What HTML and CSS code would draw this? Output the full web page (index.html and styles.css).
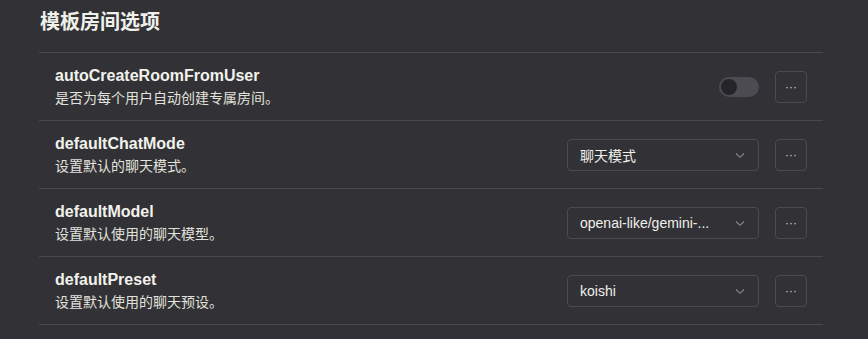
FILE: index.html
```html
<!DOCTYPE html>
<html lang="zh-CN">
<head>
<meta charset="utf-8">
<link rel="stylesheet" href="styles.css">
</head>
<body>
<div class="page">
  <h2 class="heading">模板房间选项</h2>
  <div class="list">
    <div class="row">
      <div class="info">
        <div class="title">autoCreateRoomFromUser</div>
        <div class="desc">是否为每个用户自动创建专属房间。</div>
      </div>
      <div class="controls">
        <span class="switch"><span class="knob"></span></span>
        <button class="more">···</button>
      </div>
    </div>
    <div class="row">
      <div class="info">
        <div class="title">defaultChatMode</div>
        <div class="desc">设置默认的聊天模式。</div>
      </div>
      <div class="controls">
        <div class="select"><span class="value">聊天模式</span>
          <svg class="chev" viewBox="0 0 12 12" width="12" height="12"><path d="M2 4.5 L6 8.3 L10 4.5" fill="none" stroke="currentColor" stroke-width="1.1"/></svg></div>
        <button class="more">···</button>
      </div>
    </div>
    <div class="row">
      <div class="info">
        <div class="title">defaultModel</div>
        <div class="desc">设置默认使用的聊天模型。</div>
      </div>
      <div class="controls">
        <div class="select"><span class="value">openai-like/gemini-...</span>
          <svg class="chev" viewBox="0 0 12 12" width="12" height="12"><path d="M2 4.5 L6 8.3 L10 4.5" fill="none" stroke="currentColor" stroke-width="1.1"/></svg></div>
        <button class="more">···</button>
      </div>
    </div>
    <div class="row">
      <div class="info">
        <div class="title">defaultPreset</div>
        <div class="desc">设置默认使用的聊天预设。</div>
      </div>
      <div class="controls">
        <div class="select"><span class="value">koishi</span>
          <svg class="chev" viewBox="0 0 12 12" width="12" height="12"><path d="M2 4.5 L6 8.3 L10 4.5" fill="none" stroke="currentColor" stroke-width="1.1"/></svg></div>
        <button class="more">···</button>
      </div>
    </div>
  </div>
</div>
</body>
</html>
```
FILE: styles.css
```css
html, body {
  margin: 0;
  padding: 0;
  background: #313136;
  height: 100%;
}
body {
  font-family: "Liberation Sans", "Noto Sans CJK SC", sans-serif;
  color: rgba(255, 255, 245, 0.9);
}
.page {
  width: 784px;
  padding: 8px 0 0 39px;
}
.heading {
  margin: 0 0 16px 1px;
  font-size: 20px;
  line-height: 28px;
  font-weight: 700;
  color: #f0f0ea;
}
.list {
  border-bottom: 1px solid #47474c;
}
.row {
  height: 67px;
  border-top: 1px solid #47474c;
  display: flex;
  align-items: center;
  justify-content: space-between;
  padding: 0 16px;
}
.info {
  display: flex;
  flex-direction: column;
  gap: 2px;
}
.title {
  font-size: 16px;
  font-weight: 700;
  line-height: 20px;
  color: #f2f2ec;
}
.desc {
  font-size: 14px;
  line-height: 20px;
  color: #e2e2dc;
}
.controls {
  display: flex;
  align-items: center;
  gap: 16px;
}
.switch {
  width: 40px;
  height: 20px;
  border-radius: 10px;
  background: #4b4b51;
  display: flex;
  align-items: center;
  padding: 0 2px;
  box-sizing: border-box;
}
.knob {
  width: 16px;
  height: 16px;
  border-radius: 50%;
  background: #252529;
}
.more {
  width: 32px;
  height: 32px;
  box-sizing: border-box;
  border: 1px solid #4a4a50;
  border-radius: 4px;
  background: transparent;
  color: #c8c8c4;
  font-family: "Liberation Sans", sans-serif;
  font-size: 12px;
  letter-spacing: 0;
  padding: 0;
  line-height: 30px;
}
.select {
  width: 192px;
  height: 32px;
  box-sizing: border-box;
  border: 1px solid #4a4a50;
  border-radius: 4px;
  display: flex;
  align-items: center;
  padding: 0 12px;
  gap: 8px;
}
.value {
  flex: 1;
  min-width: 0;
  font-size: 14px;
  color: #f0f0ea;
  white-space: nowrap;
}
.chev {
  color: #8a8a8e;
  flex: none;
}
```
